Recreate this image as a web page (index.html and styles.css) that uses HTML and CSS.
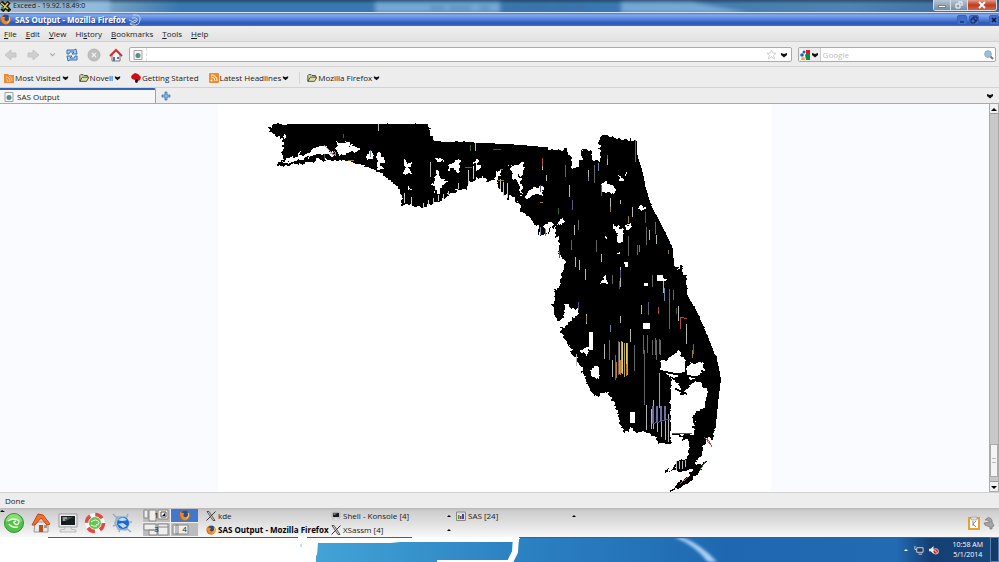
FILE: index.html
```
<!DOCTYPE html>
<html lang="en">
<head>
<meta charset="utf-8">
<meta name="viewport" content="width=device-width, initial-scale=1.0">
<title>SAS Output - Mozilla Firefox</title>
<link rel="stylesheet" href="styles.css">
</head>
<body>
<svg class="defs" aria-hidden="true">
  <symbol id="fox" viewBox="0 0 12 12">
    <circle cx="6" cy="6" r="5.5" fill="#d95d0d"/>
    <circle cx="6.5" cy="4.5" r="3.7" fill="#284c94"/>
    <path d="M1 2Q3 4 4 3Q7 4 5 5Q4 7 7 8Q10 7 11 3Q13 9 7 11.5Q1 11 1 2" fill="#f08b1d"/>
    <path d="M10 3Q12 7 8 10" stroke="#ffd34a" stroke-width="1" fill="none"/>
  </symbol>
  <symbol id="folder" viewBox="0 0 12 10">
    <path d="M1 9V2l1-1h3l1 1h4v2M1 9L4 4h8L9 9Z" fill="#d9e0ae" stroke="#38391f" stroke-width="1"/>
  </symbol>
  <symbol id="down" viewBox="0 0 8 6"><path d="M1 1l3 1 3-1v2L4 5.500 1 3Z" fill="#111"/></symbol>
  <symbol id="page" viewBox="0 0 10 10">
    <path d="M1 .5h8v9H1Z" fill="#f4f4f4" stroke="#a3a3a3"/>
    <circle cx="5" cy="5.500" r="2.500" fill="#4f86a8"/><path d="M4 4l3 1-2 3Z" fill="#5c9d4e"/>
  </symbol>
  <symbol id="xicon" viewBox="0 0 10 10">
    <path d="M1 .5h2L9 9.500H7Z" fill="#ddd" stroke="#333" stroke-width=".8"/><path d="M9.500 .5L.5 9.500" stroke="#333"/>
  </symbol>
  <symbol id="screen" viewBox="0 0 22 20">
    <path d="M2 1h18v13H2Z" fill="#eee" stroke="#999"/><path d="M4 3h14v9H4Z" fill="#171c1c"/>
    <path d="M5 4h11l-7 4H5Z" fill="#4b5351"/><path d="M6 5h4M6 7h2" stroke="#dedede"/>
    <path d="M8 14h6v2l5 1v2H3v-2l5-1Z" fill="#e5e5e5" stroke="#aaa" stroke-width=".7"/>
  </symbol>
</svg>

<header class="exceed">
  <svg class="glow" viewBox="0 0 999 13" preserveAspectRatio="none">
    <g filter="url(#soft)"><path d="M80 0h30v13H70ZM375 2h125v11H375ZM621 2h70l60 11H621Z" fill="#9bc8ec"/>
    <path d="M430 8h60M505 8h80" stroke="#43688a" stroke-width="3" stroke-dasharray="15 4 22 9" opacity=".6"/></g>
    <filter id="soft"><feGaussianBlur stdDeviation="2"/></filter>
  </svg>
  <svg class="app" viewBox="0 0 11 11"><path d="M1 1l9 9M9 1L2 10" stroke="#171b0c" stroke-width="4"/><path d="M1 2l7 6M8 2L3 8" stroke="#e0cf3c" stroke-width="1.500"/><path d="M1 6h3v2H1Z" fill="#3f9844"/></svg>
  <span>Exceed - 19.92.18.49:0</span>
  <div class="win-buttons">
    <button aria-label="Minimize"><svg viewBox="0 0 10 8"><path d="M1.500 4.500h7v2h-7Z" fill="#fff" stroke="#565b63" stroke-width=".7"/></svg></button>
    <button aria-label="Restore"><svg viewBox="0 0 10 8"><path d="M4 1h4v4M2 3h4v4H2Z" fill="none" stroke="#fff" stroke-width="1"/></svg></button>
    <button class="close" aria-label="Close"><svg viewBox="0 0 10 8"><path d="M2 1l6 6M8 1L2 7" stroke="#fff" stroke-width="2"/></svg></button>
  </div>
</header>

<div class="titlebar">
  <svg class="app" viewBox="0 0 12 12"><use href="#fox"/></svg>
  <b>SAS Output - Mozilla Firefox</b>
  <svg class="swirl" viewBox="0 0 14 12"><path d="M5 1Q13 0 12 6T5 11Q0 10 3 9Q10 9 9 5Q8 3 4 4M1 6Q5 9 8 6" fill="none" stroke="#c5d4ec"/></svg>
  <div class="moz-buttons">
    <button aria-label="Minimize window"><svg viewBox="0 0 8 8"><path d="M2 6h4" stroke="#071536"/></svg></button>
    <button aria-label="Restore window"><svg viewBox="0 0 8 8"><path d="M3 3V1h4v4H5M1 3h4v4H1Z" fill="none" stroke="#071536" stroke-width=".8"/></svg></button>
    <button class="last" aria-label="Close window"><svg viewBox="0 0 8 8"><path d="M2 2l4 4M6 2L2 6" stroke="#071536" stroke-width="1.500"/></svg></button>
  </div>
</div>

<nav class="menubar">
  <button><u>F</u>ile</button><button><u>E</u>dit</button><button><u>V</u>iew</button><button>Hi<u>s</u>tory</button><button><u>B</u>ookmarks</button><button><u>T</u>ools</button><button><u>H</u>elp</button>
</nav>

<div class="toolbar">
  <div class="nav-buttons">
    <button aria-label="Back"><svg viewBox="0 0 14 14"><path d="M1 7l6-5v3h5v4H7v3Z" fill="#cfcfcf" stroke="#c4c4c4"/></svg></button>
    <button aria-label="Forward"><svg viewBox="0 0 14 14"><path d="M13 7L7 2v3H2v4h5v3Z" fill="#cfcfcf" stroke="#c4c4c4"/></svg></button>
    <button class="small" aria-label="Recent pages"><svg viewBox="0 0 8 8"><path d="M2 3l2 2 2-2" fill="none" stroke="#aaa"/></svg></button>
    <button aria-label="Reload"><svg viewBox="0 0 14 14"><path d="M2 6V2h7l2-1 1 5H7l2-2H5Q4 4 4 6ZM12 8v4H5l-2 1-1-5h5l-2 2h4q1 0 1-2Z" fill="#a9cdf0" stroke="#2f68ac" stroke-width=".9"/></svg></button>
    <button aria-label="Stop"><svg viewBox="0 0 14 14"><circle cx="7" cy="7" r="6" fill="#bfbfbf" stroke="#b4b4b4"/><path d="M5 5l4 4M9 5L5 9" stroke="#eee" stroke-width="1.500"/></svg></button>
    <button aria-label="Home"><svg viewBox="0 0 14 14"><path d="M3 7l4-4 4 4v6H3Z" fill="#f4f4f4" stroke="#777"/><path d="M4 9h2v4H4ZM8 9h2v2H8Z" fill="#55789b"/><path d="M1 8l6-6 6 6" stroke="#d82c32" stroke-width="2" fill="none"/></svg></button>
  </div>
  <div class="address">
    <svg class="site" viewBox="0 0 10 10"><use href="#page"/></svg><i></i>
    <input type="text" aria-label="Address">
    <svg class="star" viewBox="0 0 12 12"><path d="M6 1l1.500 3.500H11L8.200 7 9.500 11 6 8.600 2.500 11 3.800 7 1 4.500h3.500Z" fill="#fff" stroke="#ccc"/></svg>
    <svg class="down" viewBox="0 0 8 6"><use href="#down"/></svg>
  </div>
  <div class="search">
    <button aria-label="Search engine">
      <svg class="site" viewBox="0 0 10 10"><path d="M0 0h10v10H0Z" fill="#fff"/><path d="M6 0h4v4H6Z" fill="#e11b22"/><path d="M6 4h4v6H6L5 5Z" fill="#118844"/><circle cx="2" cy="5" r="1.800" fill="#2458bd"/><circle cx="4" cy="2" r="1.500" fill="#2458bd"/><circle cx="3" cy="9" r="2" fill="#f4af25"/></svg>
      <svg class="down" viewBox="0 0 8 6"><use href="#down"/></svg>
    </button>
    <input type="text" placeholder="Google" aria-label="Search">
    <svg class="site" viewBox="0 0 10 10"><path d="M6 6l3 3" stroke="#777" stroke-width="2"/><circle cx="4" cy="4" r="3.300" fill="#95c0e5" stroke="#9aa7b0"/></svg>
  </div>
</div>

<nav class="bookmarks">
  <a href="#"><svg viewBox="0 0 10 10"><path d="M0 1h4l1 1h5v8H0Z" fill="#eb8b36"/><path d="M2 4q4 0 4 5M2 6.500q2 0 2 2.500M5 3q3 1 3 5" fill="none" stroke="#fbe0c4" stroke-width=".8"/></svg>Most Visited<svg class="down" viewBox="0 0 8 6"><use href="#down"/></svg></a>
  <a href="#"><svg viewBox="0 0 12 10"><use href="#folder"/></svg>Novell<svg class="down" viewBox="0 0 8 6"><use href="#down"/></svg></a>
  <a href="#"><svg viewBox="0 0 10 10"><path d="M1 2l3-2 3 1 3 3-1 3-2 1-1 2-2-1V7L1 6 0 4Z" fill="#d00d13"/><path d="M5 6l2 1-1 3-2-1Z" fill="#241010"/></svg>Getting Started</a>
  <a href="#"><svg viewBox="0 0 10 10"><rect width="10" height="10" rx="1" fill="#f28b27"/><circle cx="2.500" cy="7.500" r="1" fill="#fff"/><path d="M2 4q4 0 4 4M2 2q6 0 6 6" stroke="#fff" fill="none"/></svg>Latest Headlines<svg class="down" viewBox="0 0 8 6"><use href="#down"/></svg></a>
  <a class="split" href="#"><svg viewBox="0 0 12 10"><use href="#folder"/></svg>Mozilla Firefox<svg class="down" viewBox="0 0 8 6"><use href="#down"/></svg></a>
</nav>

<div class="tabs">
  <button class="tab"><svg class="site" viewBox="0 0 10 10"><use href="#page"/></svg>SAS Output</button>
  <button class="new-tab" aria-label="New tab"><svg viewBox="0 0 10 10"><path d="M4 1h2v3h3v2H6v3H4V6H1V4h3Z" fill="#8db8e2" stroke="#3e73ae" stroke-width=".8"/></svg></button>
  <button class="all-tabs" aria-label="List all tabs"><svg class="down" viewBox="0 0 8 6"><use href="#down"/></svg></button>
</div>

<main class="content">
  <div class="canvas">
    <div class="output">
      <svg class="map" viewBox="217 104 555 388" role="img" aria-label="Map of Florida" shape-rendering="crispEdges">
        <filter id="ragged" filterUnits="userSpaceOnUse" x="217" y="104" width="555" height="388">
          <feTurbulence type="fractalNoise" baseFrequency=".2" numOctaves="2" seed="4"/>
          <feDisplacementMap in="SourceGraphic" scale="7" xChannelSelector="R" yChannelSelector="G"/>
        </filter>
        <path d="M272 124H281V125H286V124H427L429 130 430 136 434 141 470 142 511 144 548 147V160H430L400 150 300 134 278 134ZM637 140V155L642 170 645 185 651 205 660 222 667 236 673 249 674 267 684 277H686L687 295 695 308 703 325 710 342 718 363 720 373 721 380 719 395 717 415 715 433 711 400 700 345 640 230 610 150Z"/>
        <g filter="url(#ragged)">
        <path d="M270 125H427L429 130 430 136 434 142 470 143 511 145 548 148 550 150 560 150 564 148 568 149 570 159 573 161V168H579V160L582 159V151H584V149H589V151H591V160L600 162V137L606 134 610 135 614 137 625 139 636 141V155L641 170 644 185 650 205 659 222 666 236 672 249 674 267 679 270 680 266 682 265 684 277H685L686 295 694 308 702 325 709 342 717 363 719 373 720 380 718 395 716 415 714 435 712 440 710 436 706 441 703 449 702 455 697 459 696 463 699 465 707 459 704 466 697 474 690 482 680 488 670 492 671 489 684 480 692 473 693 469 680 471 666 472 675 468V461H684L689 455 688 440H682V436H671V444H660L657 438 650 433 635 432 632 429 623 431 618 418 614 402 609 396 604 392 599 395 593 396 589 388 586 380 578 362 570 349 560 331V323L554 315 553 304 555 297 554 289 560 285 563 270 564 262 560 256 558 250 560 242 556 235V225L553 230 551 226 549 231 545 233 542 237 540 236 541 231 538 234 538 226 533 224 530 216 520 212 519 203 510 196 505 193 497 185 494 180 488 182 484 176 478 178 467 185 465 189 455 190 447 195 440 200 430 203 420 208 410 204 402 204 399 188 390 181 378 173 365 165 350 161 330 160 315 160 300 163 285 165 276 167 277 163 283 160 281 151 284 148 282 138 276 136 272 132 269 130Z"/>
        <!-- lakes, bays and missing tracts -->
        <g fill="#fff">
          <path d="M336 142l12 0 2 3 9 2-1 4-8 1-6 3h-7l-1-12ZM293 147l5 3 2 5 10-3 3-4 6-2 4-1 10 8-2 2-9-2-6 1-9 3-6 3-22 2 8-3 12-3-1-5ZM282 133l3 2v3l-3-1ZM371 149l1 8-7 3 2-7ZM377 154l3-2v6l3-1v5l-6 1 6 3-1 3-6-1ZM403 158l8 7-3 2 3 5-8 2ZM435 170h3l1 7 4 1v3l5 2-6 1-2 3v6h-7l2-5-5-4 5-4ZM407 183l3 7h-3ZM447 165l8-5h5v5l-3 8-4-4-6 1ZM434 156l7 2 2 4-7-1Z"/>
          <path d="M510 165l11-1 4 4-4 4-2 4 3 11-2 8-2-13-6-5ZM528 192l7-6 8 2v7l-8-1-8 4-2-2ZM495 180l1-9 4-2v6l-4 9ZM472 161l6-1 2 7-5 6-3-3ZM602 183l5-3 3 5 6 4-2 5-5-4-7 4ZM618 175l5 3v3l-4-1ZM625 170l2 2v3l-3-2ZM638 206h8l-3 5-5-3ZM612 225l6 1 5 3v13h-5l-2-10ZM625 224l4-1 2 5-4 1ZM560 217l5 5-7 3ZM544 226l5-4 3 3-5 6Z"/>
          <path d="M563 303l6 2 5 4 4-1v5l-7 9-5 2-3 4-7-1 5-5 4-10ZM582 350l6-3v8l-6-3ZM618 251h3v3h-3ZM605 236h3v3h-3ZM558 322l6-3 4 3-6 5ZM605 272v8h2v3h-7l2-6 3-1Z"/>
          <path d="M668 360l5-6 4-3 8 6v13l-5 3-5 6-15-8 1-9ZM687 367l5-4 11 0 2 7-5 3-1 5-8 2-4-2ZM671 380l6 2 6 11 4-6 10-5 6 2 5 8-1 9-4 9-8 3-1 10 1 11H671ZM590 370l4-4 4-1 1 10-3 5-4-2ZM584 348l4 2-1 4-4-1Z"/>
        </g>
        </g>
        <path d="M657 275h6v3l6 2-6 1h-6ZM624 262h4v5h-3ZM644 283h4v3h-4ZM643 323h7v6h-7ZM589 332h4v18h-4ZM630 412h5v11h-5ZM671 386h6v48h-6Z" fill="#fff"/>
        <!-- ragged tract edges along the gulf and the south -->
        <path d="M403 184v20M406 184v19M409 193v11M413 193v13M416 195v10M421 193v15M425 195v12M430 190v15M435 190v12M440 188v13M445 187v10M450 184v9M467 168v18M471 168v14M475 163v17M499 176v12M502 176v16M505 180v15M508 178v22" stroke="#000" stroke-width="2"/>
        <path d="M404 193v10M411 197v8M423 203v5M428 200v6M433 198v6M438 195v6M443 194v5M448 191v4M458 183v6M468 170v14M473 169v10M500 179v10M503 182v14M507 183v15" stroke="#ccc"/>
        <!-- white and grey slivers -->
        <path d="M378 124v7M430 162v15M475 143v8M542 160v10M546 175v6M569 185v12M574 225v10M588 170v10M607 155v10M610 198v12M620 200v4M632 207v10M649 230v10M575 257v10M579 260v10M585 269v11M601 254v8M620 267v20M656 235v9M663 281v12M678 306v15M586 314v10M620 316v7M641 305v9M630 329v13M686 324v20M576 354v12M604 344v15M612 360v17M653 400v29M646 405v25M651 409v20M657 407v25M661 407v30M665 408v32M668 414v28" stroke="#b7b7b7"/>
        <path d="M635 140v22M655 222v12M628 236v20M646 227v18M669 289v40M652 275v12M648 305v10M643 335v19M647 335v18M655 338v17M659 339v15M694 344v10M609 340v20M618 341v34M634 345v26M644 350v55M652 340v15M656 340v20M660 340v15M615 355v25M578 220v10M594 165v18M596 240v12M571 240v10M612 275v9M637 245v10M673 290v10M565 165v12" stroke="#666"/>
        <path d="M676 461v9M679 461v8M682 461v8M685 460v7" stroke="#bbb"/>
        <!-- coloured tract outlines -->
        <path d="M323 145l9 8 2-2 1 4-6-2" stroke="#d579a6" fill="none"/>
        <path d="M619 342v32M621 341v32M624 343v34M627 343v32M659 373v35" stroke="#b3a750"/>
        <path d="M622 342v32M626 343v30" stroke="#e0cf68"/>
        <path d="M616 362v16M620 360v15M626 364v12" stroke="#c87824"/>
        <path d="M653 406v17M657 406v16M661 406v15M665 406v14" stroke="#6f6ca6" stroke-width="2"/>
        <path d="M652 424l19-5" stroke="#555278"/>
        <path d="M370 150v7M664 288v13M540 227v8M545 229v7M610 325v7M598 163v8M588 177v4M639 245v7" stroke="#6387b0"/>
        <path d="M324 154v5M343 134v4M493 149h8M470 145v6M645 212v11M558 208v6M619 281v8M676 308v6M672 434h20M700 470l6-9" stroke="#35633a"/>
        <path d="M465 167h7M572 200v10M540 185v7M620 270v8M578 302v8M648 302v8M559 251v7M601 185v11" stroke="#61508a"/>
        <path d="M542 158v8M607 155v4M658 307v7M680 317v12M681 317l6 2M704 437l8 10-5-9" stroke="#b9454b" fill="none"/>
        <path d="M347 160h6M610 207v5M540 202h3M668 250v4M693 350v8M500 169h3M498 180h6M628 216v7M586 316v6M680 484l8-6" stroke="#9b7b38"/>
        <path d="M660 371l25 5 17 2M675 389l12 5M680 394h4M694 415v8M692 427h4" stroke="#000" stroke-width="2" fill="none"/>
      </svg>
    </div>
  </div>
  <div class="scrollbar">
    <button aria-label="Scroll up"><svg viewBox="0 0 8 8"><path d="M1 6l3-3 3 3Z"/></svg></button>
    <div class="track"><div class="thumb"><i></i></div></div>
    <button aria-label="Scroll down"><svg viewBox="0 0 8 8"><path d="M1 3h6L4 6Z"/></svg></button>
  </div>
</main>

<div class="status">Done</div>

<div class="panel">
  <svg class="corner" viewBox="0 0 6 4"><path d="M0 3l2-2 3 2Z"/></svg>
  <div class="launchers">
    <button aria-label="Applications"><svg viewBox="0 0 22 22"><circle cx="11" cy="11" r="9.500" fill="#52c24a" stroke="#2c9432"/><path d="M3 10Q4 2 11 2T19 10Q11 5 3 10" fill="#a4e78b" opacity=".7"/><path d="M5 9Q11 5 16 9Q16 14 12 12Q9 10 13 9M6 12Q9 16 15 15" stroke="#eaffdf" stroke-width="1.500" fill="none"/></svg></button>
    <button aria-label="Home folder"><svg viewBox="0 0 22 22"><path d="M5 10h13v10H4Z" fill="#e8e8e8" stroke="#999"/><path d="M9 13h4v7H9Z" fill="#c34c19"/><path d="M14 13h3v3h-3Z" fill="#999"/><path d="M2 13L8 2l5 1 7 9-3 1-6-7-6 7Z" fill="#ef7130" stroke="#c34613"/></svg></button>
    <button aria-label="Terminal"><svg viewBox="0 0 22 20"><use href="#screen"/></svg></button>
    <button aria-label="Help center"><svg viewBox="0 0 22 22"><circle cx="11" cy="11" r="8" fill="#67c450" stroke="#f7f7f7" stroke-width="4"/><circle cx="11" cy="11" r="8.500" fill="none" stroke="#e34948" stroke-width="3.500" stroke-dasharray="8 5.350"/><path d="M7 10q5-4 8 0-1 5-3 2M7 13q3 2 6 1" stroke="#e9ffe2" fill="none"/></svg></button>
    <button aria-label="Browser"><svg viewBox="0 0 22 22"><path d="M2 2l5 5M17 2l-2 5M2 14l6-2M8 20l2-5M15 16l5 4M17 10h4M6 5l8 0 4 7-3 6-8-1-3-6Z" fill="#a9cbee" stroke="#93aecb" stroke-width="1.500"/><circle cx="12" cy="11" r="6" fill="#2468c6"/><path d="M7 8q5-5 9 0-5 2-9 0M7 12l5-1 4 3-4 2Z" fill="#b9ddff"/></svg></button>
  </div>
  <div class="pager">
    <button aria-label="Desktop 1"><svg viewBox="0 0 27 13"><path d="M1 1h4v8H1ZM6 1h7v11H6ZM15 1h10v9H15Z" fill="#eee" stroke="#888"/><path d="M18 3h5v5h-5Z" fill="#fff" stroke="#555"/><path d="M19 7l3-3v3Z"/></svg><span>1</span></button>
    <button class="current" aria-label="Desktop 2"><svg viewBox="0 0 27 13"><use href="#fox" x="8" y="1" width="11" height="11"/></svg></button>
    <button aria-label="Desktop 3"><svg viewBox="0 0 27 13"><path d="M1 1h12v6H1ZM6 7h8v5H6ZM15 1h10v11H15ZM15 4h10" fill="#eee" stroke="#888"/></svg><span>3</span></button>
    <button aria-label="Desktop 4"><svg viewBox="0 0 27 13"><path d="M2 2h5v9H2ZM5 2h12v9H5Z" fill="#eee" stroke="#888"/></svg><span>4</span></button>
  </div>
  <div class="tasks">
    <button><svg viewBox="0 0 10 10"><use href="#xicon"/></svg><span>kde</span></button>
    <button><svg viewBox="0 0 22 20"><use href="#screen"/></svg><span>Shell - Konsole [4]</span><svg class="up" viewBox="0 0 6 4"><path d="M1 3l2-2 2 2Z"/></svg></button>
    <button><svg viewBox="0 0 10 10"><path d="M.5 1h9v8.500h-9Z" fill="#ddd" stroke="#888"/><path d="M2 4h1.500v4H2Z" fill="#24a436"/><path d="M4 5h1.500v3H4Z" fill="#c32234"/><path d="M6 3h2v5H6Z" fill="#304ac1"/></svg><span>SAS [24]</span><svg class="up" viewBox="0 0 6 4"><path d="M1 3l2-2 2 2Z"/></svg></button>
    <button class="active"><svg viewBox="0 0 12 12"><use href="#fox"/></svg><span>SAS Output - Mozilla Firefox</span></button>
    <button><svg viewBox="0 0 10 10"><use href="#xicon"/></svg><span>XSassm [4]</span><svg class="up" viewBox="0 0 6 4"><path d="M1 3l2-2 2 2Z"/></svg></button>
  </div>
  <div class="panel-tray">
    <svg viewBox="0 0 12 14"><path d="M1 2h10v11H1Z" fill="#fff" stroke="#e2a52b" stroke-width="2"/><path d="M3 1h6v3H3Z" fill="#ddd" stroke="#999" stroke-width=".6"/><path d="M5 5v5M8 5L5 8l3 3" stroke="#888" fill="none"/></svg>
    <svg viewBox="0 0 12 14"><path d="M2 4q4-5 7 0v2l2 4-2 1v2H7v-2L2 9 1 7l6-1-3-2Z" fill="#a4a4a4" stroke="#777" stroke-width=".7"/></svg>
  </div>
</div>

<footer class="taskbar">
  <svg class="wallpaper" viewBox="0 0 999 25" preserveAspectRatio="none">
    <defs>
      <linearGradient id="sky"><stop offset="0" stop-color="#43a3d6"/><stop offset=".28" stop-color="#2c83c3"/><stop offset=".6" stop-color="#1f68b1"/><stop offset=".85" stop-color="#226ab2"/><stop offset=".9" stop-color="#143f73"/><stop offset="1" stop-color="#17477c"/></linearGradient>
      <filter id="beam"><feGaussianBlur stdDeviation="1.500"/></filter>
    </defs>
    <path d="M316 5h683v20H316Z M519 0h480v10H519Z" fill="url(#sky)"/>
    <path d="M674 0Q695 8 708 25h9Q702 8 682 0Z" fill="#a9d0f4" filter="url(#beam)"/>
    <path d="M0 0H520V2L515 3 484 2 422 3 390 6H318L317 18 314 20V25H0Z" fill="#fff"/>
    <path d="M516 0L515 15 510 25" fill="none" stroke="#fff" stroke-width="6"/>
    <path d="M437 24h75" stroke="#fff" stroke-width="2"/>
    <path d="M48 .5H298M307 .5H412M519 .5H999" stroke="#4a5f70"/>
    <path d="M301 7v3" stroke="#8bc5e6"/>
  </svg>
  <div class="win-tray">
    <svg viewBox="0 0 6 4"><path d="M1 3l2-2 2 2Z" fill="#fff"/></svg>
    <svg viewBox="0 0 11 11"><path d="M3 3h7v5H3ZM5 10h4M1 1v4h2" fill="#273a4d" stroke="#d7dde3"/></svg>
    <svg viewBox="0 0 11 11"><path d="M0 4h2l3-3v9L2 7H0Z" fill="#eee"/><circle cx="7.500" cy="7" r="3" fill="#d92525" stroke="#fff" stroke-width=".7"/><path d="M6 5.500l3 3" stroke="#fff"/></svg>
    <time datetime="2014-05-01T10:58">10:58 AM<br>5/1/2014</time>
    <button aria-label="Show desktop"></button>
  </div>
</footer>
</body>
</html>
```
FILE: styles.css
```
* {
  box-sizing: border-box;
}
html, body {
  height: 100%;
  margin: 0;
}
body {
  display: flex;
  flex-direction: column;
  overflow: hidden;
  background: #ededed;
  color: #1a1a1a;
  font-family: "Open Sans", sans-serif;
  font-size: 8px;
  line-height: 12px;
}
button, input {
  margin: 0;
  padding: 0;
  border: 0;
  background: none;
  color: inherit;
  font: inherit;
}
svg {
  display: block;
  flex: none;
}
.defs {
  position: absolute;
  width: 0;
  height: 0;
}
.app {
  width: 11px;
  height: 11px;
}
.site {
  width: 10px;
  height: 10px;
}
.down {
  width: 8px;
  height: 6px;
}

/* title bars */
.exceed {
  position: relative;
  display: flex;
  align-items: center;
  gap: 2px;
  flex: none;
  height: 13px;
  border-bottom: 1px solid #d5e2ec;
  background: linear-gradient(rgba(25, 45, 65, 0.6), transparent 4px), linear-gradient(90deg, #a6bdcf, #7ea7c8 10%, #3977b0 18%, #3977b0 60%, #4f83b1 85%, #38699a);
  color: #101820;
  font-size: 7px;
  overflow: hidden;
}
.exceed > span {
  position: relative;
}
.exceed .app {
  position: relative;
}
.glow {
  position: absolute;
  width: 100%;
  height: 13px;
  opacity: 0.6;
}
.win-buttons {
  position: relative;
  display: flex;
  align-self: flex-start;
  margin-left: auto;
  margin-right: 2px;
  height: 11px;
  border: 1px solid #d5dfe8;
  border-top: 0;
  border-radius: 0 0 3px 3px;
  overflow: hidden;
}
.win-buttons button {
  width: 17px;
  background: linear-gradient(#b5c5d3, #788da1);
  border-right: 1px solid #d5dfe8;
}
.win-buttons svg {
  width: 10px;
  height: 8px;
  margin: auto;
}
.win-buttons .close {
  width: 28px;
  border: 0;
  background: linear-gradient(#e49b87, #bd3c25 50%, #d46545);
}
.titlebar {
  display: flex;
  align-items: center;
  gap: 4px;
  flex: none;
  height: 13px;
  background: linear-gradient(#4e78c8, #82a9ef 2px, #5984dd 6px, #2c58b8 10px, #3f6bd0);
  color: #fff;
  text-shadow: 1px 1px #254b97;
}
.titlebar .swirl {
  margin-left: -2px;
}
.swirl {
  width: 14px;
  height: 12px;
}
.moz-buttons {
  display: flex;
  gap: 2px;
  margin-left: auto;
}
.moz-buttons button {
  width: 10px;
  height: 10px;
  border: 1px solid #3762bb;
  border-radius: 2px;
  background: #426dca;
}
.moz-buttons svg {
  width: 8px;
  height: 8px;
}
.moz-buttons .last {
  margin-left: 8px;
}

/* menu and toolbars */
.menubar {
  display: flex;
  align-items: center;
  gap: 9px;
  flex: none;
  height: 16px;
  padding-top: 1px;
  padding-left: 4px;
  border-bottom: 1px solid #d0d0d0;
  background: linear-gradient(#efefef, #e2e2e2);
}
.toolbar {
  display: flex;
  align-items: center;
  gap: 6px;
  flex: none;
  height: 25px;
  padding: 1px 3px 0 4px;
  border-bottom: 1px solid #d2d2d2;
}
.nav-buttons {
  display: flex;
  align-items: center;
  gap: 8px;
}
.nav-buttons svg {
  width: 14px;
  height: 14px;
}
.nav-buttons .small svg {
  width: 9px;
  height: 9px;
}
.address, .search {
  display: flex;
  align-items: center;
  height: 15px;
  border: 1px solid #aaa;
  border-radius: 2px;
  background: #fff;
}
.address {
  flex: 1;
  gap: 3px;
  padding: 0 3px;
}
.address i {
  align-self: stretch;
  border-left: 1px dashed #ddd;
}
.address input, .search input {
  flex: 1;
  min-width: 0;
  outline: 0;
}
.star {
  width: 11px;
  height: 11px;
}
.search {
  width: 20%;
  gap: 2px;
  padding-right: 1px;
}
.search button {
  display: flex;
  align-items: center;
  align-self: stretch;
  gap: 1px;
  padding: 0 1px;
  border-right: 1px solid #ccc;
  background: #ededed;
}
.search input::placeholder {
  color: #bcbcbc;
  opacity: 1;
}
.bookmarks {
  display: flex;
  align-items: center;
  gap: 10px;
  flex: none;
  height: 21px;
  padding-top: 1px;
  padding-left: 4px;
  border-bottom: 1px solid #d2d2d2;
}
.bookmarks a {
  display: flex;
  align-items: center;
  gap: 1px;
  color: inherit;
  text-decoration: none;
}
.bookmarks svg {
  width: 10px;
  height: 10px;
}
.bookmarks .down {
  width: 7px;
  height: 6px;
}
.bookmarks .split {
  padding-left: 7px;
  border-left: 1px solid #d5d5d5;
}
.tabs {
  display: flex;
  align-items: center;
  flex: none;
  height: 16px;
  border-bottom: 1px solid #aaa;
}
.tab {
  display: flex;
  align-items: center;
  gap: 3px;
  width: 156px;
  height: 15px;
  padding-top: 1px;
  padding-left: 4px;
  border-top: 2px solid #3165b4;
  border-right: 1px solid #a3a3a3;
  border-radius: 0 2px 0 0;
  background: #f6f6f6;
}
.new-tab {
  margin-left: 5px;
}
.new-tab svg {
  width: 10px;
  height: 10px;
}
.all-tabs {
  margin-left: auto;
  margin-right: 5px;
}

/* page */
.content {
  display: flex;
  flex: 1;
  min-height: 0;
  background: #fff;
}
.canvas {
  display: flex;
  justify-content: center;
  flex: 1;
  background: #fafbff;
}
.output {
  width: 56%;
  background: #fff;
}
.map {
  width: 100%;
  height: 100%;
}
.scrollbar {
  display: flex;
  flex-direction: column;
  width: 10px;
  border: 1px solid #aaa;
  border-top: 0;
  background: #c8c8c8;
}
.scrollbar button {
  height: 9px;
  background: #f1f1f1;
}
.scrollbar svg {
  width: 8px;
  height: 8px;
}
.track {
  display: flex;
  flex-direction: column;
  justify-content: flex-end;
  flex: 1;
  padding-bottom: 4px;
  border-top: 1px solid #999;
  border-bottom: 1px solid #999;
}
.thumb {
  display: flex;
  align-items: center;
  justify-content: center;
  height: 9%;
  border: 1px solid #aaa;
  background: #f4f4f4;
}
.thumb i {
  width: 4px;
  height: 5px;
  border-top: 1px solid #bbb;
  border-bottom: 1px solid #bbb;
}
.status {
  flex: none;
  height: 16px;
  padding: 2px 5px;
  border-top: 1px solid #d2d2d2;
}

/* desktop panel */
.panel {
  position: relative;
  display: flex;
  align-items: center;
  flex: none;
  height: 29px;
  padding: 0 4px 0 3px;
  background: linear-gradient(#b8b8b8, #cdcdcd 3px, #dedede 14px, #f8f8f8);
}
.corner {
  position: absolute;
  top: 1px;
  left: 0;
  width: 6px;
  height: 4px;
}
.launchers {
  display: flex;
  gap: 5px;
}
.launchers svg {
  width: 22px;
  height: 22px;
}
.pager {
  display: grid;
  grid-template-columns: 27px 27px;
  gap: 1px;
  margin-left: 10px;
  background: #f0f0f0;
}
.pager button {
  position: relative;
  height: 13px;
  background: #bcbcbc;
}
.pager svg {
  width: 27px;
  height: 13px;
}
.pager span {
  position: absolute;
  inset: 0;
}
.pager .current {
  background: #4277cc;
}
.tasks {
  display: grid;
  grid-template-columns: 125px 125px 125px;
  grid-template-rows: 14px 14px;
  margin-left: 8px;
}
.tasks button {
  display: flex;
  align-items: center;
  gap: 2px;
  min-width: 0;
  white-space: nowrap;
}
.tasks svg {
  width: 10px;
  height: 10px;
}
.tasks .up {
  width: 6px;
  height: 4px;
  margin-left: auto;
  margin-right: 4px;
}
.tasks .active {
  font-weight: bold;
  color: #000;
}
.panel-tray {
  display: flex;
  gap: 3px;
  margin-left: auto;
}
.panel-tray svg {
  width: 12px;
  height: 14px;
}

/* windows taskbar */
.taskbar {
  position: relative;
  display: flex;
  flex: none;
  height: 25px;
  background: #fff;
}
.wallpaper {
  position: absolute;
  width: 100%;
  height: 100%;
}
.win-tray {
  position: relative;
  display: flex;
  align-items: center;
  gap: 5px;
  margin-left: auto;
  color: #fff;
  font-size: 7px;
  line-height: 10px;
  text-align: center;
}
.win-tray svg {
  width: 10px;
  height: 10px;
}
.win-tray svg:first-child {
  width: 6px;
  height: 4px;
}
.win-tray time {
  margin-left: 9px;
}
.win-tray button {
  align-self: stretch;
  width: 9px;
  margin-left: 2px;
  border: 1px solid #5580ad;
  background: #153b68;
}
```
